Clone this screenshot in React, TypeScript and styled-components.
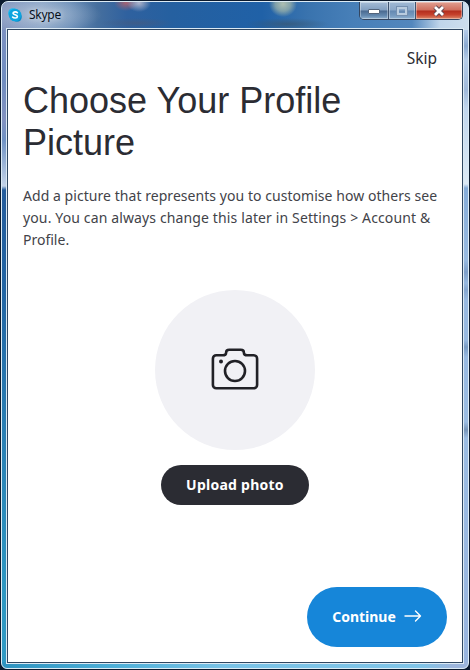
import React from 'react';
import styled, { createGlobalStyle } from 'styled-components';

const GlobalStyle = createGlobalStyle`
  * { box-sizing: border-box; }
  html, body { margin: 0; padding: 0; }
  body { background: #0b1a2e; overflow: hidden; }
  button { border: 0; padding: 0; margin: 0; background: none; cursor: pointer; }
`;

const Frame = styled.div`
  width: 468px;
  height: 668px;
  margin: 1px 0 0 1px;
  padding: 0 4px 4px;
  border: 1px solid #dcebf5;
  border-radius: 7px 7px 6px 6px;
  background:
    linear-gradient(90deg, #2e93c0 0, #4dafd8 110px, #78c2e6 220px, #80c4e8 420px, #9cb5dc 450px) 0 100% / 100% 6px no-repeat,
    linear-gradient(180deg, #7c91c2 0, #6f8dc0 50px, #8292c0 90px, #6f92c4 110px, #c3d3e8 156px, #245c9c 160px, #2265a4 260px, #2a7fb4 400px, #2e97c2 560px, #319ac4 640px) 0 28px / 6px 640px no-repeat,
    linear-gradient(180deg, #b4cbe8 0, #8aa9d0 16px, #b6cde8 30px, #a0b9da 60px, #c0d5ec 78px, #dce9f5 154px, #86acd8 158px, #98bae0 230px, #7e9fc9 242px, #96b8df 253px, #85a6cf 260px, #98b9e0 270px, #98b9e0 310px, #799bc3 317px, #98b9e0 327px, #9bbce2 392px, #7795b9 400px, #9bbce2 408px, #98b4de 640px) 100% 28px / 6px 640px no-repeat,
    radial-gradient(ellipse 12px 9px at 137px 1px, rgba(205, 200, 214, .8), transparent),
    radial-gradient(ellipse 12px 8px at 124px 1px, rgba(178, 99, 111, .9), transparent),
    radial-gradient(ellipse 14px 13px at 281px 2px, rgba(180, 195, 178, .95) 0, rgba(155, 178, 170, .75) 55%, transparent),
    radial-gradient(ellipse 42px 6px at 285px 22px, rgba(55, 87, 116, .75), transparent),
    radial-gradient(ellipse 38px 5px at 135px 21px, rgba(70, 90, 125, .65), transparent),
    radial-gradient(ellipse 62px 18px at 38px 13px, rgba(194, 207, 220, .6), transparent),
    linear-gradient(90deg, #8295be 0, #8aa5c8 40px, #6c8fb9 68px, #466f9e 95px, #2f619f 125px, #2560a0 170px, #2061a7 260px, #3973ae 305px, #477fb8 350px, #5387bd 410px, #c0d5ea 438px, #cddeee 466px);
`;

const TitleBar = styled.header`
  display: flex;
  align-items: flex-start;
  height: 26px;
`;

const AppLogo = styled.svg`
  width: 14px;
  height: 14px;
  margin: 6px 7px 0 2px;
`;

const WindowTitle = styled.span`
  flex: 1;
  padding-top: 5px;
  color: #07101c;
  font: 12px/15px 'Noto Sans', sans-serif;
  letter-spacing: -0.25px;
  text-shadow: 0 0 6px rgba(255, 255, 255, .8);
`;

const WindowControls = styled.div`
  display: flex;
  height: 18px;
  margin-right: 1px;
  border: 1px solid #344660;
  border-top: 0;
  border-radius: 0 0 5px 5px;
  overflow: hidden;
`;

const buttonWidths = { min: 29, max: 27, close: 46 };

const ControlButton = styled.button<{ $kind: 'min' | 'max' | 'close' }>`
  display: flex;
  align-items: center;
  justify-content: center;
  width: ${({ $kind }) => buttonWidths[$kind]}px;
  height: 17px;
  border-right: ${({ $kind }) => ($kind === 'close' ? '0' : '1px solid #3e536f')};
  box-shadow: inset 0 0 0 1px rgba(255, 255, 255, .35);
  background: ${({ $kind }) =>
    $kind === 'close'
      ? 'linear-gradient(#e0a092 0, #cf6e5d 48%, #b32d1d 52%, #c6422d 75%, #dc8a6c 100%)'
      : $kind === 'min'
        ? 'linear-gradient(#a5bcd6 0, #829fc0 48%, #49698f 52%, #6489af 80%, #8fb0ce 100%)'
        : 'linear-gradient(#a0b9d4 0, #8ba8c8 48%, #6488b1 52%, #769abf 80%, #91b2d1 100%)'};
`;

const Client = styled.main`
  display: flex;
  flex-direction: column;
  align-items: center;
  width: 458px;
  height: 636px;
  border: 1px solid #dceaf4;
  box-shadow: inset 0 0 0 1px #2f4762;
  background: #fff;
  padding: 0 16px 16px;
  color: #2b2c33;
  font-family: 'Noto Sans', sans-serif;
`;

const SkipButton = styled.button`
  align-self: flex-end;
  margin: 19px 10px 0 0;
  color: #2b2c33;
  font: 15.5px/21px 'Noto Sans', sans-serif;
`;

const Heading = styled.h1`
  align-self: stretch;
  margin: 11px 0 0;
  font: 400 36px/42px 'Liberation Sans', sans-serif;
  white-space: nowrap;
`;

const Description = styled.p`
  align-self: stretch;
  margin: 21px 0 0;
  color: #424349;
  font-size: 14px;
  line-height: 22px;
  white-space: nowrap;
`;

const Line = styled.span<{ $spacing: number }>`
  display: block;
  letter-spacing: ${({ $spacing }) => $spacing}px;
`;

const Avatar = styled.div`
  display: grid;
  place-items: center;
  flex: none;
  width: 160px;
  height: 160px;
  margin-top: 39px;
  padding-bottom: 2px;
  border-radius: 50%;
  background: #f1f1f5;
`;

const UploadButton = styled.button`
  flex: none;
  width: 148px;
  height: 40px;
  margin-top: 15px;
  border-radius: 20px;
  background: #2b2c33;
  color: #fff;
  font: 700 14px/40px 'Noto Sans', sans-serif;
  letter-spacing: .25px;
`;

const ContinueButton = styled.button`
  display: flex;
  align-items: center;
  justify-content: center;
  gap: 8px;
  flex: none;
  align-self: flex-end;
  width: 140px;
  height: 60px;
  margin-top: auto;
  border-radius: 30px;
  background: #1686d9;
  color: #fff;
  font: 700 14px/20px 'Noto Sans', sans-serif;

  svg {
    margin-bottom: 2px;
  }
`;

export default function App() {
  return (
    <>
      <GlobalStyle />
      <Frame>
        <TitleBar>
          <AppLogo viewBox="0 0 14 14">
            <circle cx="5" cy="5" r="4.8" fill="#20b9ee" />
            <circle cx="9" cy="9" r="4.8" fill="#078dcb" />
            <circle cx="7" cy="7" r="6.3" fill="#0ca5df" />
            <path d="M9.4 4.7C8.5 3.5 5 3.4 5 5.3c0 1.8 4.4 1.2 4.4 3.2 0 2-3.7 1.9-4.8.6" fill="none" stroke="#fff" strokeWidth="1.6" strokeLinecap="round" />
          </AppLogo>
          <WindowTitle>Skype</WindowTitle>
          <WindowControls>
            <ControlButton $kind="min" aria-label="Minimize">
              <svg width="12" height="6" viewBox="0 0 12 6"><rect x=".5" y="1.5" width="11" height="4" rx=".5" fill="#fff" stroke="#53647b" /></svg>
            </ControlButton>
            <ControlButton $kind="max" aria-label="Maximize">
              <svg width="12" height="10" viewBox="0 0 12 10"><rect x="2" y="2" width="8" height="6" fill="none" stroke="#b9ccdf" strokeWidth="2" /><rect x=".5" y=".5" width="11" height="9" fill="none" stroke="#7590b0" /></svg>
            </ControlButton>
            <ControlButton $kind="close" aria-label="Close">
              <svg width="14" height="12" viewBox="0 0 14 12"><path d="m3 2 8 8m0-8-8 8" stroke="#614750" strokeWidth="4.6" /><path d="m3 2 8 8m0-8-8 8" stroke="#fff" strokeWidth="2.8" /></svg>
            </ControlButton>
          </WindowControls>
        </TitleBar>
        <Client>
          <SkipButton>Skip</SkipButton>
          <Heading>Choose Your Profile<br />Picture</Heading>
          <Description>
            <Line $spacing={0.05}>Add a picture that represents you to customise how others see</Line>
            <Line $spacing={0.13}>you. You can always change this later in Settings &gt; Account &amp;</Line>
            <Line $spacing={0}>Profile.</Line>
          </Description>
          <Avatar>
            <svg width="48" height="44" viewBox="0 0 48 44" fill="none" stroke="#212126" strokeWidth="2.6">
              <path d="M5.3 8.3h6.2c2.2 0 3.6-.7 3.6-2.6 0-1.8 1.3-2.9 3.1-2.9h11.6c1.8 0 3.1 1.1 3.1 2.9 0 1.9 1.4 2.6 3.6 2.6h6.2c1.9 0 3.4 1.5 3.4 3.4v26.2c0 1.9-1.5 3.4-3.4 3.4H5.3c-1.9 0-3.4-1.5-3.4-3.4V11.7c0-1.9 1.5-3.4 3.4-3.4Z" />
              <circle cx="24" cy="24" r="10" />
              <circle cx="10" cy="14.5" r="2" fill="#212126" stroke="none" />
            </svg>
          </Avatar>
          <UploadButton>Upload photo</UploadButton>
          <ContinueButton>
            Continue
            <svg width="18" height="14" viewBox="0 0 18 14" fill="none" stroke="#fff" strokeWidth="1.4" strokeLinecap="round" strokeLinejoin="round"><path d="M1 7h15.500M11.500 2l5 5-5 5" /></svg>
          </ContinueButton>
        </Client>
      </Frame>
    </>
  );
}
